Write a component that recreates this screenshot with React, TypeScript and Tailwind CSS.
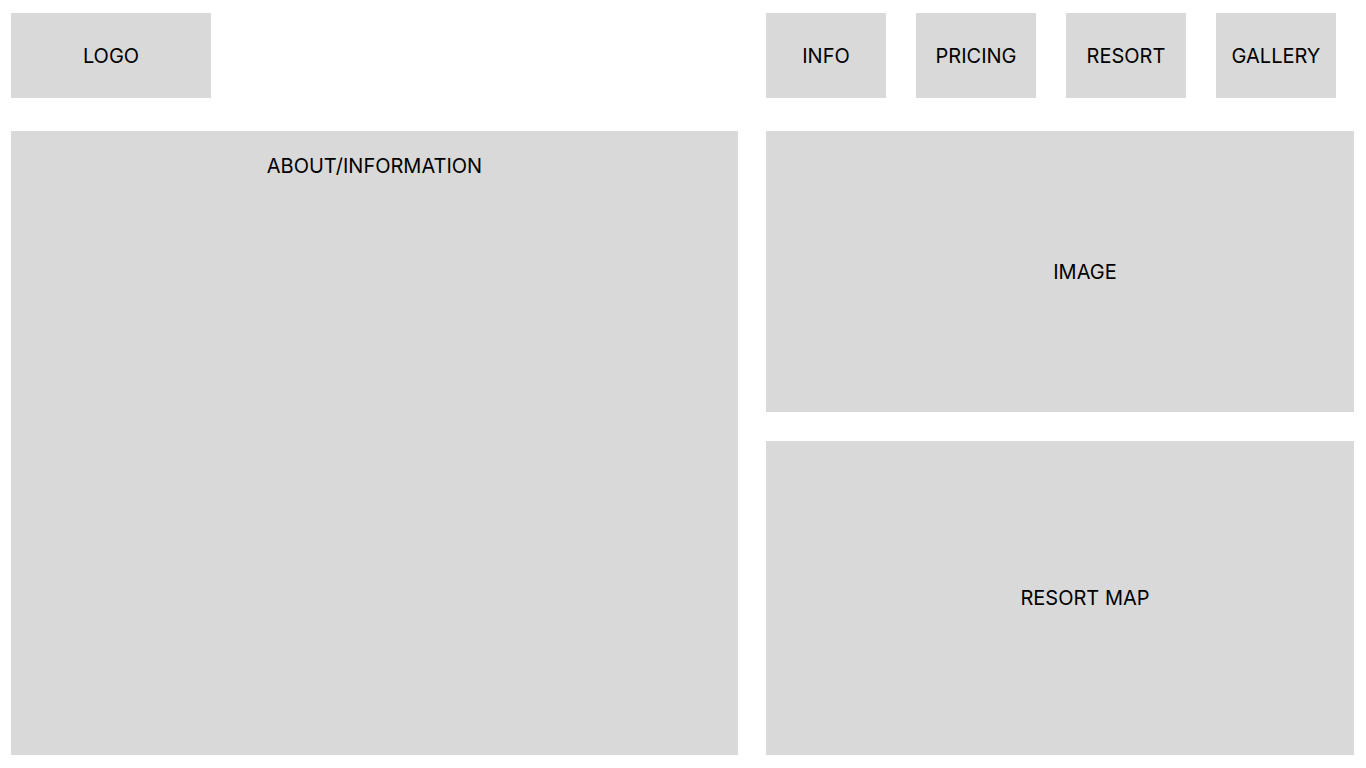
const navItems = ['INFO', 'PRICING', 'RESORT', 'GALLERY'];

export default function App() {
  return (
    <div
      className="w-[1366px] h-[768px] bg-white text-black text-[20px] leading-6 pl-[11px] pt-[13px]"
      style={{ fontFamily: 'Inter, "Liberation Sans", sans-serif' }}
    >
      <header className="flex w-[1343px] h-[85px]">
        <div className="w-[200px] h-[85px] bg-[#d9d9d9] flex items-center justify-center">LOGO</div>
        <nav className="ml-auto flex gap-[30px] pr-[18px]">
          {navItems.map((item) => (
            <div key={item} className="w-[120px] h-[85px] bg-[#d9d9d9] flex items-center justify-center">
              {item}
            </div>
          ))}
        </nav>
      </header>

      <main className="flex gap-[28px] mt-[33px]">
        <section className="w-[727px] h-[624px] bg-[#d9d9d9] flex justify-center pt-[23px]">
          ABOUT/INFORMATION
        </section>
        <div className="flex flex-col gap-[29px] w-[588px]">
          <div className="h-[281px] bg-[#d9d9d9] flex items-center justify-center pl-[50px]">IMAGE</div>
          <div className="h-[314px] bg-[#d9d9d9] flex items-center justify-center pl-[50px]">RESORT MAP</div>
        </div>
      </main>
    </div>
  );
}
